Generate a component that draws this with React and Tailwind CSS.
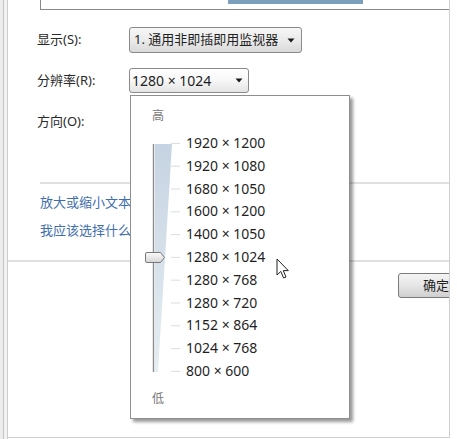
const resolutions = [
  '1920 × 1200',
  '1920 × 1080',
  '1680 × 1050',
  '1600 × 1200',
  '1400 × 1050',
  '1280 × 1024',
  '1280 × 768',
  '1280 × 720',
  '1152 × 864',
  '1024 × 768',
  '800 × 600',
]

const STEP = 22.8

function Arrow() {
  return (
    <svg width="8" height="5" viewBox="0 0 8 5" className="shrink-0">
      <path d="M0.5 0.5 L7.5 0.5 L4 4.5 Z" fill="#1a1a1a" />
    </svg>
  )
}

function Slider() {
  const h = STEP * resolutions.length
  return (
    <svg width="55" height={h} viewBox={`0 0 55 ${h}`} className="shrink-0">
      <defs>
        <linearGradient id="wedge" x1="0" y1="0" x2="0" y2="1">
          <stop offset="0" stopColor="#c6d3e2" />
          <stop offset="1" stopColor="#e6eef2" />
        </linearGradient>
        <linearGradient id="thumb" x1="0" y1="0" x2="0" y2="1">
          <stop offset="0" stopColor="#fbfbfb" />
          <stop offset="1" stopColor="#d6d6d6" />
        </linearGradient>
      </defs>
      <polygon points="24,12 41,12 27,240 24,240" fill="url(#wedge)" />
      <line x1="22.5" y1="12" x2="22.5" y2="240" stroke="#8c8c8c" strokeWidth="1.4" />
      {resolutions.map((r, i) => (
        <line
          key={r}
          x1="40"
          x2="49"
          y1={STEP / 2 + STEP * i}
          y2={STEP / 2 + STEP * i}
          stroke="#d6dde2"
          strokeWidth="1"
        />
      ))}
      <path
        d="M16 120.5 H29.5 L33.5 125.5 L29.5 130.5 H16 Q14.5 130.5 14.5 129 V122 Q14.5 120.5 16 120.5 Z"
        fill="url(#thumb)"
        stroke="#777"
        strokeWidth="1"
      />
    </svg>
  )
}

export default function App() {
  return (
    <div className="relative w-[457px] h-[439px] flex items-start bg-white overflow-hidden font-['Noto_Sans','Noto_Sans_CJK_SC',sans-serif] text-[13px] text-[#2a2a2a]">
      {/* window frame */}
      <div className="flex h-full shrink-0">
        <div className="w-[3px] bg-[#ececec]" />
        <div className="w-[1px] bg-[#c4c4c4]" />
        <div className="w-[3px] bg-[#f2f2f2]" />
        <div className="w-[1px] bg-[#cdcdcd]" />
      </div>

      <div className="w-[442px] h-[438px] shrink-0 flex flex-col border-r border-b border-[#cfcfcf] overflow-hidden">
        {/* monitor preview box */}
        <div className="ml-[32px] h-[10px] border-l border-b border-[#8a8a8a] flex">
          <div className="ml-[187px] w-[135px] h-[4px] bg-[#7d9fbe]" />
        </div>

        <div className="pl-[29px] mt-[17px] flex items-center">
          <div className="w-[92px]">显示(S):</div>
          <div className="w-[173px] h-[26px] flex items-center pl-[4px] pr-[6px] border border-[#8a8a8a] rounded-[3px] bg-gradient-to-b from-[#f6f6f6] via-[#ebebeb] to-[#d9d9d9]">
            <span className="flex-1 whitespace-nowrap text-[#1f1f1f]">1. 通用非即插即用监视器</span>
            <Arrow />
          </div>
        </div>

        <div className="pl-[29px] mt-[15px] flex items-center">
          <div className="w-[92px]">分辨率(R):</div>
          <div className="w-[120px] h-[25px] flex items-center pl-[2px] pr-[5px] border border-[#8a8a8a] rounded-[3px] bg-gradient-to-b from-white via-[#f7f7f7] to-[#e4e4e4]">
            <span className="flex-1 text-[14px] text-[#1f1f1f] whitespace-nowrap">1280 × 1024</span>
            <Arrow />
          </div>
        </div>

        <div className="pl-[29px] mt-[16px] h-[25px] flex items-center">
          <div className="w-[92px]">方向(O):</div>
        </div>

        <div className="ml-[32px] mt-[48px] h-[2px] bg-[#e0e0e0]" />

        <div className="ml-[32px] mt-[9px] leading-[18px] text-[#3f6eae] whitespace-nowrap">放大或缩小文本和其他项目</div>
        <div className="ml-[32px] mt-[10px] leading-[18px] text-[#3f6eae] whitespace-nowrap">我应该选择什么显示器设置?</div>

        <div className="mt-[21px] h-[2px] bg-[#e0e0e0]" />

        <div className="mt-[11px] pl-[390px] flex">
          <button className="shrink-0 w-[76px] h-[25px] border border-[#7a7a7a] rounded-[3px] bg-gradient-to-b from-[#f4f4f4] via-[#e6e6e6] to-[#cfcfcf] text-[13px] text-[#1f1f1f]">
            确定
          </button>
        </div>
      </div>

      {/* resolution dropdown popup */}
      <div className="absolute left-[130px] top-[95px] w-[220px] h-[324px] bg-white border border-[#8e8e8e] shadow-[3px_3px_3px_rgba(0,0,0,0.4)] flex flex-col">
        <div className="pl-[21px] pt-[12px] leading-[16px] text-[12px] text-[#777]">高</div>
        <div className="mt-[8px] flex">
          <Slider />
          <div className="flex flex-col text-[14px] text-[#1f1f1f]">
            {resolutions.map(r => (
              <div key={r} className="h-[22.8px] leading-[22.8px] whitespace-nowrap">
                {r}
              </div>
            ))}
          </div>
        </div>
        <div className="pl-[21px] mt-[8px] leading-[16px] text-[12px] text-[#777]">低</div>
      </div>

      {/* mouse pointer */}
      <svg className="absolute left-[276px] top-[258px]" width="14" height="22" viewBox="0 0 14 22">
        <path
          d="M1 1 L1 17 L4.8 13.4 L7.6 20 L10 19 L7.3 12.6 L12.3 12.6 Z"
          fill="#fff"
          stroke="#222"
          strokeWidth="1"
          strokeLinejoin="round"
        />
      </svg>
    </div>
  )
}
